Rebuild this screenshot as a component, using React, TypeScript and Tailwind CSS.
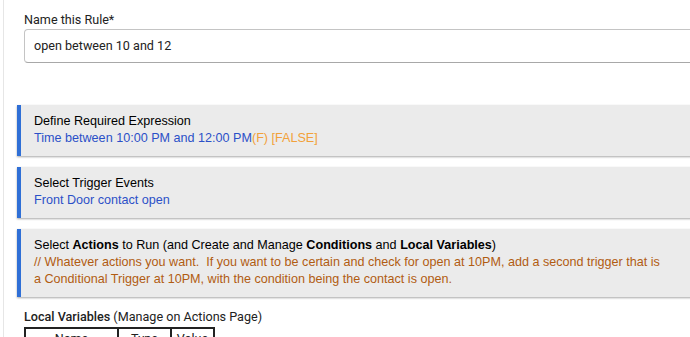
export default function App() {
  return (
    <div className="min-h-screen bg-white overflow-hidden">
      <div className="ml-[3px] border-l border-[#e6e6e6] min-h-[337px] pt-[11px]">
        <div className="pl-[20px] font-['Roboto',sans-serif] text-[12.6px] text-[#222]">
          <label className="block leading-[17px]">Name this Rule*</label>
          <div className="mt-[1px] w-[720px] h-[34px] border border-[#c4c4c4] border-b-[#a8a8a8] rounded-[4px] flex items-center pl-[9px] text-[#222]">
            open between 10 and 12
          </div>
        </div>

        <div className="mt-[42px] pl-[13px] flex flex-col gap-[11px] font-['Liberation_Sans',Arial,sans-serif] text-[12.6px] leading-[17px]">
          <div className="w-[720px] bg-[#ebebeb] border-l-[4px] border-[#2f6fd6] shadow-[0_1px_2px_rgba(0,0,0,0.35)] pl-[13px] pt-[8px] pb-[9px]">
            <div className="text-black">Define Required Expression</div>
            <div className="text-[#2b50c8]">
              Time between 10:00 PM and 12:00 PM
              <span className="text-[#f2a13a]">(F) [FALSE]</span>
            </div>
          </div>

          <div className="w-[720px] bg-[#ebebeb] border-l-[4px] border-[#2f6fd6] shadow-[0_1px_2px_rgba(0,0,0,0.35)] pl-[13px] pt-[8px] pb-[9px]">
            <div className="text-black">Select Trigger Events</div>
            <div className="text-[#2b50c8]">Front Door contact open</div>
          </div>

          <div className="w-[720px] bg-[#ebebeb] border-l-[4px] border-[#2f6fd6] shadow-[0_1px_2px_rgba(0,0,0,0.35)] pl-[13px] pt-[8px] pb-[9px]">
            <div className="text-black">
              Select <b>Actions</b> to Run (and Create and Manage <b>Conditions</b> and{" "}
              <b>Local Variables</b>)
            </div>
            <div className="text-[#b15c12]">
              // Whatever actions you want.&nbsp; If you want to be certain and check for open at 10PM, add a second trigger that is
              <br />
              a Conditional Trigger at 10PM, with the condition being the contact is open.
            </div>
          </div>
        </div>

        <div className="mt-[11px] pl-[20px] font-['Roboto',sans-serif] text-[12.6px] text-[#222]">
          <div className="leading-[17px]">
            <span className="font-medium">Local Variables</span> (Manage on Actions Page)
          </div>
          <table className="mt-[2px] border-2 border-[#222] border-collapse">
            <thead>
              <tr>
                <th className="w-[93px] border-2 border-[#222] font-normal px-2 py-[1px] leading-[17px]">Name</th>
                <th className="w-[53px] border-2 border-[#222] font-normal px-2 py-[1px] leading-[17px]">Type</th>
                <th className="w-[43px] border-2 border-[#222] font-normal px-1 py-[1px] leading-[17px]">Value</th>
              </tr>
            </thead>
          </table>
        </div>
      </div>
    </div>
  );
}
